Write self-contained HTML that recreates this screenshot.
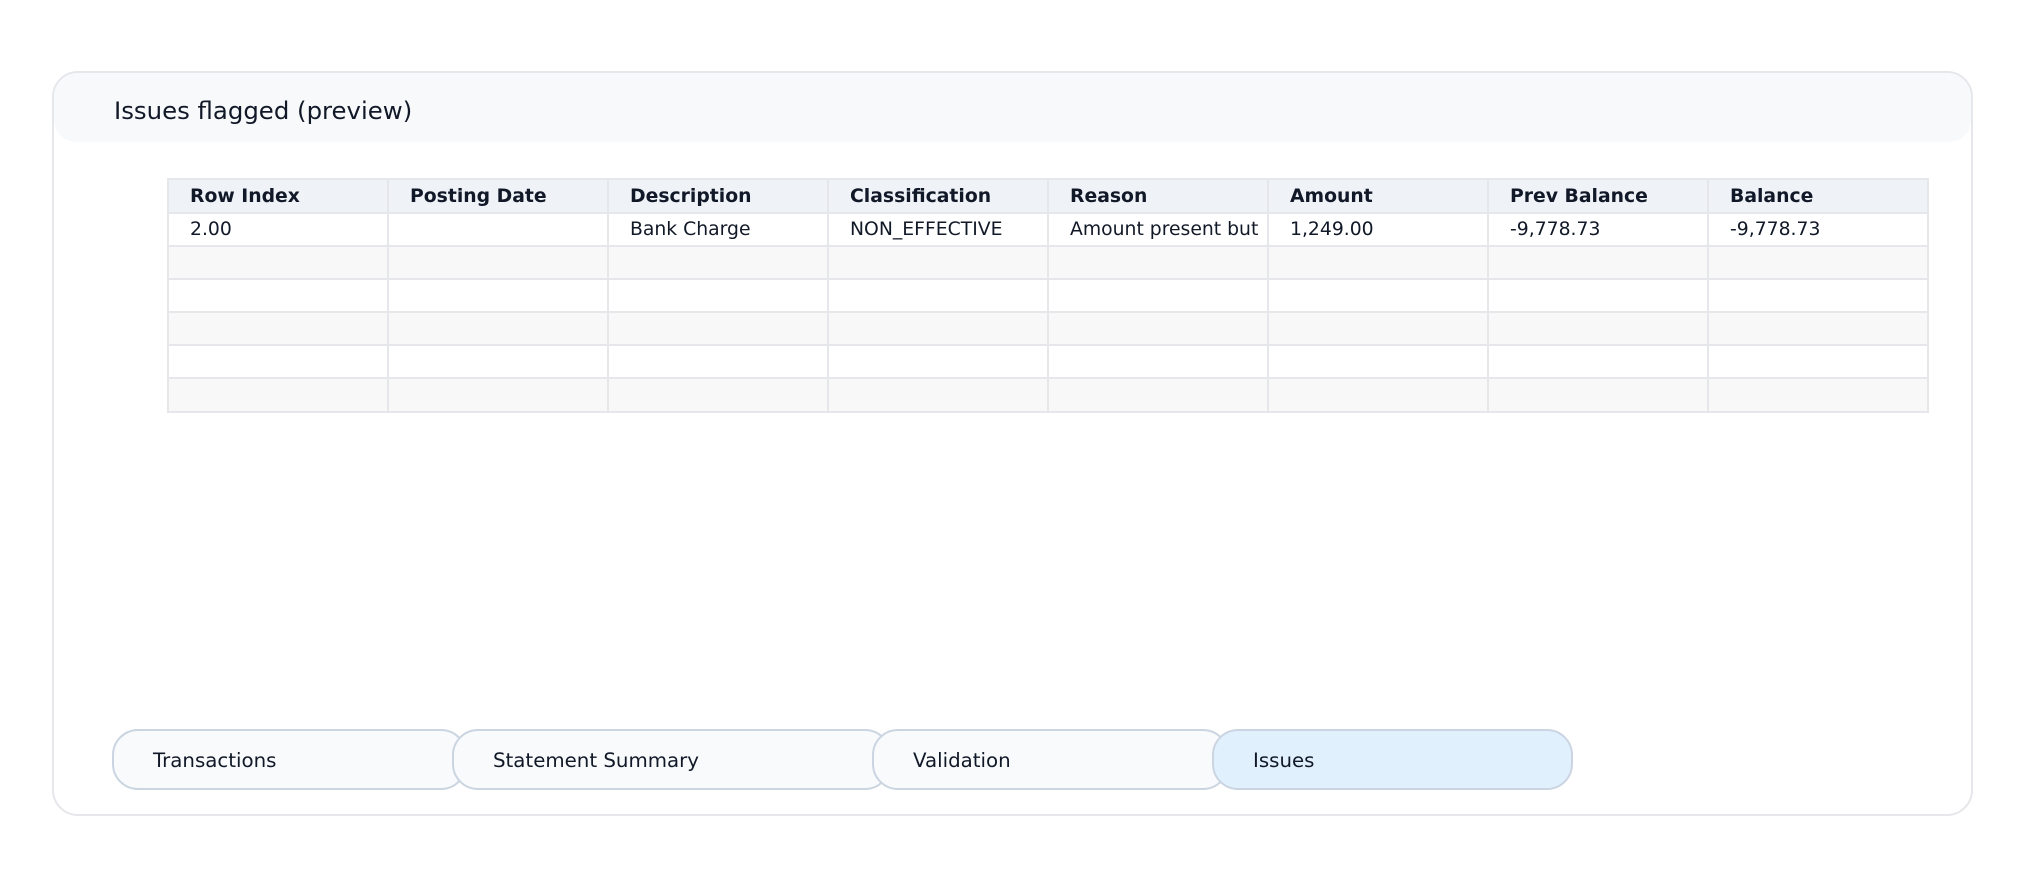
<!DOCTYPE html>
<html><head><meta charset="utf-8"><style>
*{box-sizing:border-box;margin:0;padding:0}
body{width:2025px;height:889px;background:#fff;font-family:"DejaVu Sans","Liberation Sans",sans-serif;color:#111827;position:relative;overflow:hidden}
.card{position:absolute;left:52px;top:71px;width:1921px;height:745px;border:2px solid #e5e7eb;border-radius:26px;background:#fff}
.hdr{position:absolute;left:0;top:0;width:100%;height:69px;background:#f8f9fb;border-radius:24px 24px 22px 22px}
.title{position:absolute;left:60px;top:23px;font-size:24.4px;color:#111827}
table{position:absolute;left:113px;top:105px;border-collapse:collapse;table-layout:fixed;width:1760px}
td,th{width:220px;height:33.1px;border:2px solid #e5e7eb;padding:0 0 0 21px;text-align:left;font-size:18.8px;white-space:nowrap;overflow:hidden;font-weight:normal}
th{background:#eff3f8;font-weight:bold;height:34px}
tr.a td{background:#fff}
tr.b td{background:#f8f8f8}
.btn{position:absolute;top:729px;height:61px;border:2px solid #cbd5e1;border-radius:26px;background:#f8fafc;font-size:19.8px;padding-left:39px;line-height:59px}
</style></head><body>
<div class="card">
<div class="hdr"><div class="title">Issues flagged (preview)</div></div>
<table>
<tr><th>Row Index</th><th>Posting Date</th><th>Description</th><th>Classification</th><th>Reason</th><th>Amount</th><th>Prev Balance</th><th>Balance</th></tr>
<tr class="a"><td>2.00</td><td></td><td>Bank Charge</td><td>NON_EFFECTIVE</td><td>Amount present but</td><td>1,249.00</td><td>-9,778.73</td><td>-9,778.73</td></tr>
<tr class="b"><td></td><td></td><td></td><td></td><td></td><td></td><td></td><td></td></tr>
<tr class="a"><td></td><td></td><td></td><td></td><td></td><td></td><td></td><td></td></tr>
<tr class="b"><td></td><td></td><td></td><td></td><td></td><td></td><td></td><td></td></tr>
<tr class="a"><td></td><td></td><td></td><td></td><td></td><td></td><td></td><td></td></tr>
<tr class="b"><td></td><td></td><td></td><td></td><td></td><td></td><td></td><td></td></tr>
</table>
</div>
<div class="btn" style="left:112px;width:355px">Transactions</div>
<div class="btn" style="left:452px;width:439px">Statement Summary</div>
<div class="btn" style="left:872px;width:357px">Validation</div>
<div class="btn" style="left:1212px;width:361px;background:#e0f0fd">Issues</div>
</body></html>
